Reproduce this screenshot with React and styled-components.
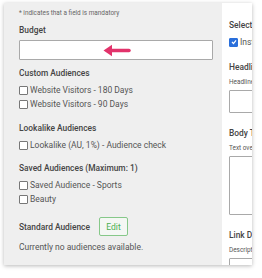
import React from "react";
import styled, { createGlobalStyle } from "styled-components";

const Global = createGlobalStyle`
  html, body {
    margin: 0;
    padding: 0;
    background: #ffffff;
    font-family: Roboto, "Liberation Sans", sans-serif;
  }
`;

const Page = styled.div`
  padding: 3px 0 0 4px;
  width: 262px;
  height: 278px;
  box-sizing: border-box;
  overflow: hidden;
`;

const Card = styled.div`
  display: flex;
  width: 248px;
  height: 262px;
  box-shadow: 0 1px 4px rgba(0, 0, 0, 0.28);
  overflow: hidden;
`;

const LeftPanel = styled.div`
  width: 218px;
  flex-shrink: 0;
  background: #efefef;
  padding: 5px 0 0 15px;
  box-sizing: border-box;
`;

const RightPanel = styled.div`
  flex: 1;
  background: #ffffff;
  padding: 15px 0 0 7px;
  overflow: hidden;
  white-space: nowrap;
`;

const Note = styled.div`
  font-size: 6.4px;
  line-height: 10px;
  color: #666;
`;

const Heading = styled.div`
  font-size: 8.4px;
  font-weight: 500;
  line-height: 14px;
  color: #444;
  margin-top: ${(p) => p.$mt || 0}px;
`;

const InputBox = styled.div`
  position: relative;
  margin-top: ${(p) => p.$mt || 0}px;
  width: ${(p) => p.$w || "194px"};
  height: ${(p) => p.$h || 20}px;
  box-sizing: border-box;
  background: #fff;
  border: 1px solid #a9a9a9;
  border-radius: 1px;
`;

const Arrow = styled.svg`
  position: absolute;
  left: 83px;
  top: 3px;
`;

const List = styled.div`
  margin-top: 3px;
`;

const Row = styled.label`
  display: flex;
  align-items: center;
  gap: 2px;
  height: 14px;
  font-size: 8.5px;
  color: #555;
`;

const Box = styled.span`
  width: 7px;
  height: 7px;
  border: 1px solid ${(p) => (p.$checked ? "#2a6fdb" : "#777")};
  border-radius: 1px;
  background: ${(p) => (p.$checked ? "#2a6fdb" : "#fff")};
  display: inline-flex;
  align-items: center;
  justify-content: center;
  flex-shrink: 0;
`;

const StandardRow = styled.div`
  display: flex;
  align-items: center;
  gap: 9px;
  margin-top: 11px;
`;

const EditButton = styled.button`
  height: 19px;
  width: 29px;
  padding: 0;
  font-family: inherit;
  font-size: 8.5px;
  color: #4caf50;
  background: #f4f7f4;
  border: 1px solid #86c889;
  border-radius: 2px;
`;

const Empty = styled.div`
  margin-top: 4px;
  font-size: 8.5px;
  line-height: 14px;
  color: #555;
`;

const SmallLabel = styled.div`
  font-size: 6.4px;
  line-height: 10px;
  color: #555;
  margin-top: ${(p) => p.$mt || 0}px;
`;

const Check = ({ checked, children }) => (
  <Row>
    <Box $checked={checked}>
      {checked && (
        <svg width="6" height="6" viewBox="0 0 6 6">
          <path d="M1 3 L2.5 4.5 L5 1.3" stroke="#fff" strokeWidth="1.2" fill="none" />
        </svg>
      )}
    </Box>
    {children}
  </Row>
);

export default function App() {
  return (
    <Page>
      <Global />
      <Card>
        <LeftPanel>
          <Note>* indicates that a field is mandatory</Note>
          <Heading $mt={5}>Budget</Heading>
          <InputBox $mt={3}>
            <Arrow width="28" height="13" viewBox="0 0 28 13">
              <path d="M6 6.5 H26" stroke="#e2336b" strokeWidth="3.5" strokeLinecap="round" />
              <path d="M0.5 6.5 L9 0.8 L9 12.2 Z" fill="#e2336b" />
            </Arrow>
          </InputBox>

          <Heading $mt={6}>Custom Audiences</Heading>
          <List>
            <Check>Website Visitors - 180 Days</Check>
            <Check>Website Visitors - 90 Days</Check>
          </List>

          <Heading $mt={10}>Lookalike Audiences</Heading>
          <List>
            <Check>Lookalike (AU, 1%) - Audience check</Check>
          </List>

          <Heading $mt={9}>Saved Audiences (Maximum: 1)</Heading>
          <List>
            <Check>Saved Audience - Sports</Check>
            <Check>Beauty</Check>
          </List>

          <StandardRow>
            <Heading>Standard Audience</Heading>
            <EditButton>Edit</EditButton>
          </StandardRow>
          <Empty>Currently no audiences available.</Empty>
        </LeftPanel>

        <RightPanel>
          <Heading>Select</Heading>
          <List>
            <Check checked>Instagram</Check>
          </List>
          <Heading $mt={11}>Headline</Heading>
          <SmallLabel $mt={3}>Headline</SmallLabel>
          <InputBox $mt={3} $w="60px" $h={23} />
          <Heading $mt={13}>Body Text</Heading>
          <SmallLabel $mt={3}>Text overlay</SmallLabel>
          <InputBox $mt={3} $w="60px" $h={59} />
          <Heading $mt={13}>Link Description</Heading>
          <SmallLabel $mt={3}>Description</SmallLabel>
          <InputBox $mt={3} $w="60px" $h={23} />
        </RightPanel>
      </Card>
    </Page>
  );
}
